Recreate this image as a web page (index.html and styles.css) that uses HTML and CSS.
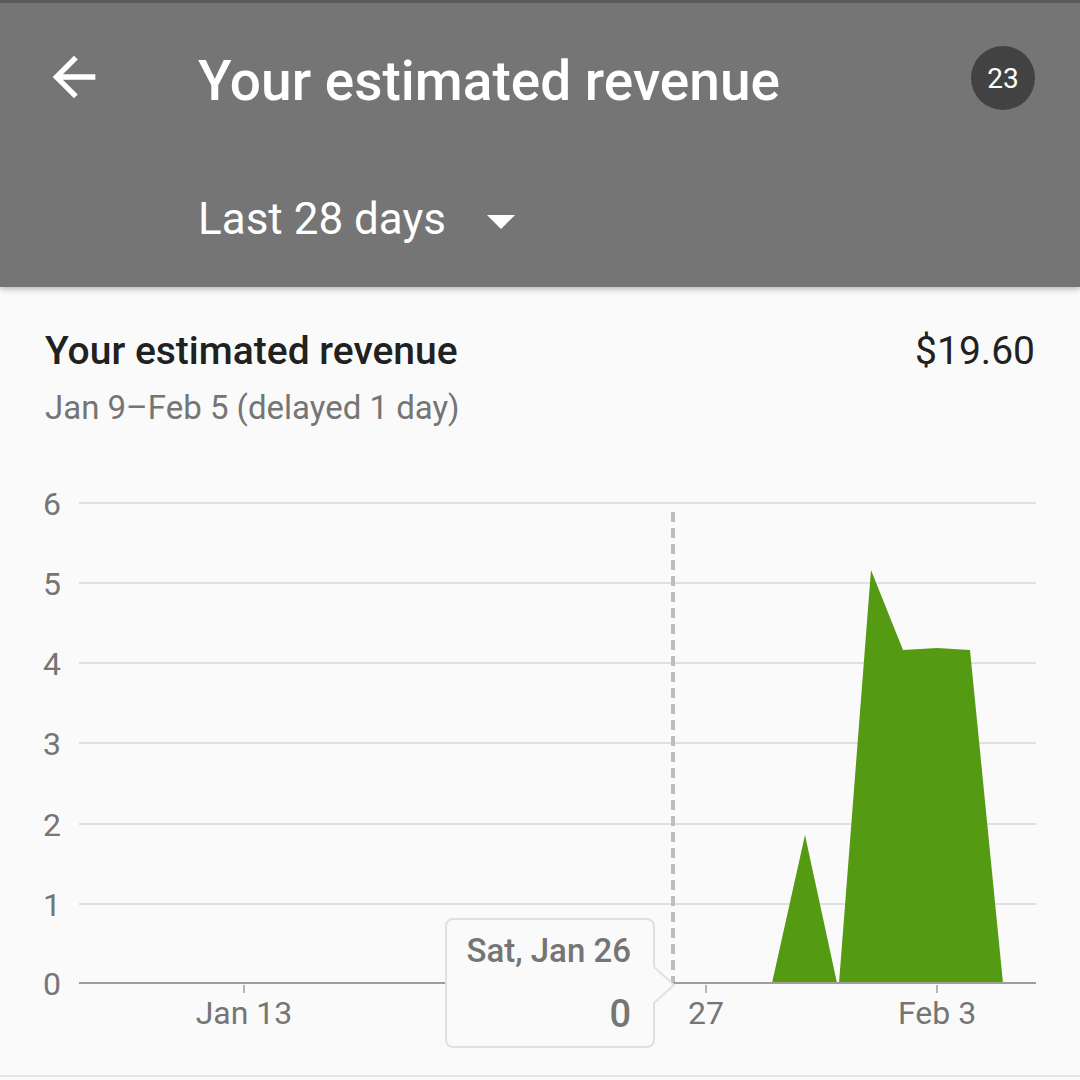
FILE: index.html
```html
<!DOCTYPE html>
<html>
<head>
<meta charset="utf-8">
<link rel="stylesheet" href="styles.css">
</head>
<body>
<header class="appbar">
  <div class="bar-row">
    <svg class="back" viewBox="0 0 24 24" width="64" height="64"><path d="M20 11H7.83l5.59-5.59L12 4l-8 8 8 8 1.41-1.41L7.83 13H20v-2z" fill="#fff"/></svg>
    <h1 class="title">Your estimated revenue</h1>
    <div class="badge">23</div>
  </div>
  <div class="range-row">
    <span class="range">Last 28 days</span>
    <span class="caret"></span>
  </div>
</header>
<main class="card">
  <div class="card-head">
    <div class="head-row">
      <div class="card-title">Your estimated revenue</div>
      <div class="amount">$19.60</div>
    </div>
    <div class="subtitle">Jan 9–Feb 5 (delayed 1 day)</div>
  </div>
  <div class="chart">
    <svg class="plot" width="1080" height="607" viewBox="0 470 1080 607">
      <g class="grid">
        <line x1="79" x2="1036" y1="503" y2="503"/>
        <line x1="79" x2="1036" y1="583" y2="583"/>
        <line x1="79" x2="1036" y1="663" y2="663"/>
        <line x1="79" x2="1036" y1="743" y2="743"/>
        <line x1="79" x2="1036" y1="824" y2="824"/>
        <line x1="79" x2="1036" y1="904" y2="904"/>
      </g>
      <g class="ylab">
        <text x="61" y="515">6</text>
        <text x="61" y="595">5</text>
        <text x="61" y="675">4</text>
        <text x="61" y="755">3</text>
        <text x="61" y="836">2</text>
        <text x="61" y="916">1</text>
        <text x="61" y="995">0</text>
      </g>
      <polygon class="area" points="772,983 805,835 837,983 839,983 871,570 903,650 937,648 970,650 1003,983"/>
      <line class="cursor" x1="673" x2="673" y1="512" y2="983"/>
      <line class="axis" x1="79" x2="1036" y1="983" y2="983"/>
      <g class="ticks">
        <line x1="244" x2="244" y1="985" y2="993"/>
        <line x1="706" x2="706" y1="985" y2="993"/>
        <line x1="937" x2="937" y1="985" y2="993"/>
      </g>
      <g class="xlab">
        <text x="244" y="1024">Jan 13</text>
        <text x="706" y="1024">27</text>
        <text x="937" y="1024">Feb 3</text>
      </g>
    </svg>
    <div class="tooltip">
      <div class="tip-date">Sat, Jan 26</div>
      <div class="tip-val">0</div>
      <svg class="tip-arrow" width="27" height="36" viewBox="0 0 27 36"><polygon points="0,0 5,0 25,18 5,36 0,36" fill="#fafafa"/><path d="M5,0 L25,18 L5,36" fill="none" stroke="#e0e0e0" stroke-width="2"/></svg>
    </div>
  </div>
</main>
</body>
</html>
```
FILE: styles.css
```css
* { box-sizing: border-box; }
html, body { margin: 0; padding: 0; }
body {
  width: 1080px;
  height: 1080px;
  overflow: hidden;
  background: #fafafa;
  font-family: Roboto, "Noto Sans", sans-serif;
}
.appbar {
  height: 287px;
  background: #757575;
  border-top: 3px solid #5a5a5a;
  box-shadow: 0 2px 6px rgba(0,0,0,0.28);
  position: relative;
  z-index: 1;
  display: flex;
  flex-direction: column;
}
.bar-row {
  height: 150px;
  display: flex;
  align-items: center;
  padding: 0 45px 0 42px;
}
.back { flex: none; margin-top: -2px; }
.title {
  margin: 6px 0 0 92px;
  font-size: 55px;
  line-height: 64px;
  font-weight: 500;
  color: #fff;
  flex: 1;
}
.badge {
  width: 64px;
  height: 64px;
  border-radius: 50%;
  background: #424242;
  color: #fff;
  font-size: 28px;
  display: flex;
  align-items: center;
  justify-content: center;
  flex: none;
}
.range-row {
  display: flex;
  align-items: center;
  padding-left: 198px;
  height: 134px;
  padding-bottom: 2px;
}
.range {
  font-size: 44px;
  line-height: 56px;
  color: #fff;
}
.caret {
  width: 0;
  height: 0;
  border-left: 14px solid transparent;
  border-right: 14px solid transparent;
  border-top: 14px solid #fff;
  margin-left: 41px;
  margin-top: 6px;
}
.card { position: relative; }
.card-head {
  height: 183px;
  padding: 41px 45px 0 45px;
}
.head-row {
  display: flex;
  justify-content: space-between;
  align-items: baseline;
}
.card-title {
  font-size: 39px;
  line-height: 46px;
  font-weight: 500;
  color: #212121;
}
.amount {
  font-size: 39px;
  line-height: 46px;
  color: #212121;
}
.subtitle {
  margin-top: 14px;
  font-size: 33px;
  line-height: 40px;
  color: #757575;
}
.chart {
  position: relative;
  height: 607px;
  border-bottom: 2px solid #e6e6e6;
}
.plot { display: block; }
.grid line { stroke: #e0e0e0; stroke-width: 2; }
.axis { stroke: #9e9e9e; stroke-width: 2; }
.ticks line { stroke: #9e9e9e; stroke-width: 1.5; }
.cursor { stroke: #bdbdbd; stroke-width: 4; stroke-dasharray: 10 6; }
.area { fill: #559a13; }
.ylab text { font-family: Roboto, sans-serif; font-size: 32px; fill: #757575; text-anchor: end; }
.xlab text { font-family: Roboto, sans-serif; font-size: 32px; fill: #757575; text-anchor: middle; }
.tooltip {
  position: absolute;
  left: 445px;
  top: 448px;
  width: 210px;
  height: 130px;
  border: 2px solid #e0e0e0;
  border-radius: 8px;
  background: #fafafa;
  padding: 13px 22px 0 0;
  text-align: right;
  color: #757575;
  font-weight: 500;
}
.tip-date { font-size: 33px; line-height: 36px; }
.tip-val { font-size: 38px; line-height: 44px; margin-top: 23px; }
.tip-arrow {
  position: absolute;
  left: 202px;
  top: 47px;
}
```
